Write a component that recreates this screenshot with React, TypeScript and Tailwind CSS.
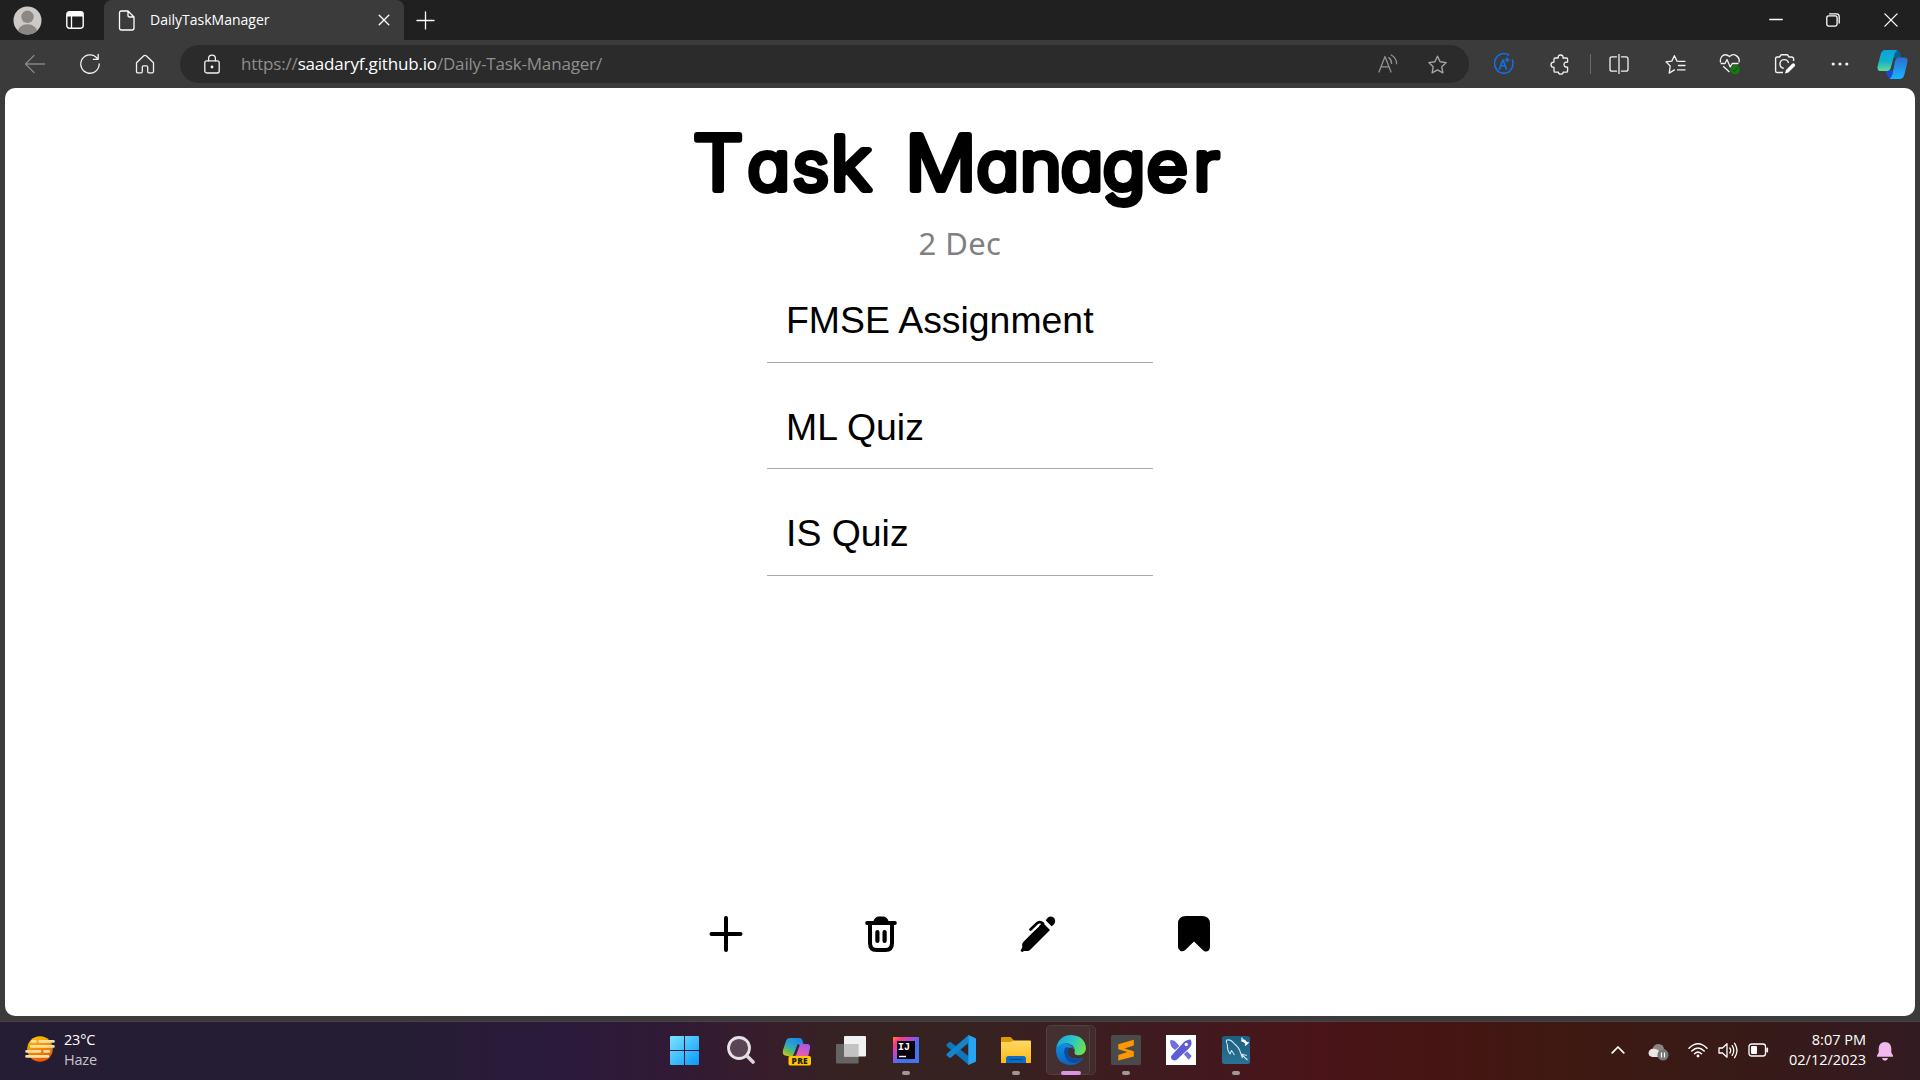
import React from "react";

type P = { children?: React.ReactNode; className?: string; vb?: string; w?: number; h?: number };

const Line = ({ children, className = "", vb = "0 0 20 20", w = 20, h = 20 }: P) => (
  <svg
    width={w}
    height={h}
    viewBox={vb}
    fill="none"
    stroke="currentColor"
    strokeWidth="1.3"
    strokeLinecap="round"
    strokeLinejoin="round"
    className={"block shrink-0 " + className}
  >
    {children}
  </svg>
);

const Flat = ({ children, className = "", vb = "0 0 30 30", w = 30, h = 30 }: P) => (
  <svg width={w} height={h} viewBox={vb} fill="none" className={"block shrink-0 " + className}>
    {children}
  </svg>
);

const STAR = "M10 1.6 12.5 6.9 18.3 7.7 14.1 11.7 15.1 17.5 10 14.7 4.9 17.5 5.9 11.7 1.7 7.7 7.5 6.9Z";

function TabBar() {
  return (
    <header className="flex h-10 items-stretch bg-[#202020]">
      <div className="flex w-[104px] items-center">
        <Flat className="ml-[13px]" vb="0 0 29 29" w={29} h={29}>
          <clipPath id="avatar"><circle cx="14.5" cy="14.5" r="14" /></clipPath>
          <g clipPath="url(#avatar)">
            <rect width="29" height="29" fill="#cccac6" />
            <circle cx="14.5" cy="10.8" r="6.2" fill="#8a8784" />
            <ellipse cx="14.5" cy="25.5" rx="9.6" ry="7.2" fill="#8a8784" />
          </g>
        </Flat>
        <Flat className="ml-6" vb="0 0 18 18" w={18} h={18}>
          <rect x="0.8" y="0.8" width="16.4" height="16.4" rx="2.6" stroke="#fff" strokeWidth="1.4" />
          <path d="M1 3.4Q1 1 3.4 1H14.6Q17 1 17 3.4V5.4H1Z" fill="#fff" />
          <path d="M5.5 5V17" stroke="#fff" strokeWidth="1.3" />
        </Flat>
      </div>
      <div className="flex w-[300px] items-center rounded-t-lg bg-[#3b3b3b]">
        <Line className="ml-[14px] text-white" vb="0 0 18 21" w={18} h={21}>
          <path d="M3.5 1H10L16 7V18Q16 20 14 20H3.5Q1.5 20 1.5 18V3Q1.5 1 3.5 1ZM10 1V5.5Q10 7 11.5 7H16" />
        </Line>
        <span className="mb-[2px] ml-[14px] w-[121px] text-[14px] tracking-[0px] whitespace-nowrap text-white">DailyTaskManager</span>
        <Line className="ml-[107px] text-white" vb="0 0 12 12" w={12} h={12}>
          <path d="M1.2 1.2 10.8 10.8M10.8 1.2 1.2 10.8" />
        </Line>
      </div>
      <div className="flex flex-1 items-center">
        <Line className="ml-3 text-white" vb="0 0 19 19" w={19} h={19}>
          <path d="M9.5 1V18M1 9.5H18" />
        </Line>
        <div className="ml-auto flex items-center">
          <Line className="text-white" vb="0 0 14 14" w={14} h={14}><path d="M0.7 6.5H13.3" /></Line>
          <Line className="ml-[43px] text-white" vb="0 0 14 14" w={14} h={14}>
            <rect x="0.8" y="2.8" width="10.3" height="10.3" rx="1.8" />
            <path d="M3.6 0.8H10.5Q13.2 0.8 13.2 3.5V10" />
          </Line>
          <Line className="mr-[22px] ml-[44px] text-white" vb="0 0 14 14" w={14} h={14}>
            <path d="M0.9 0.9 13.1 13.1M13.1 0.9 0.9 13.1" />
          </Line>
        </div>
      </div>
    </header>
  );
}

function AddressBar() {
  return (
    <div className="flex h-12 items-center bg-[#3b3b3b] text-[#f2f2f2]">
      <Line className="ml-6 text-[#858585]" vb="0 0 22 20" w={22} h={20}>
        <path d="M20.5 10H1.5M10 1.5 1.5 10 10 18.5" />
      </Line>
      <Line className="ml-[33px]" vb="0 0 22 22" w={22} h={22}>
        <path d="M20.2 11A9.2 9.2 0 1 1 18.3 5.4M14.3 6.3H19.2V1.3" />
      </Line>
      <Line className="ml-[34px]" vb="0 0 20 20" w={20} h={20}>
        <path d="M1.5 8.8 8.8 1.8Q10 .8 11.2 1.8L18.5 8.8V17.5Q18.5 18.8 17.2 18.8H13.8Q12.7 18.8 12.7 17.5V13Q12.7 11.8 11.5 11.8H8.5Q7.3 11.8 7.3 13V17.5Q7.3 18.8 6.2 18.8H2.8Q1.5 18.8 1.5 17.5Z" />
      </Line>
      <div className="ml-[25px] flex h-[38px] w-[1289px] items-center rounded-full bg-[#2b2b2b]">
        <Line className="ml-[23px]" vb="0 0 18 20" w={18} h={20}>
          <rect x="1.8" y="6.8" width="14.4" height="12.2" rx="2" />
          <path d="M5.6 6.8V4.5A3.4 3.4 0 0 1 12.4 4.5V6.8" />
          <circle cx="9" cy="13" r="0.8" fill="currentColor" />
        </Line>
        <div className="ml-5 text-[17px] tracking-[-0.17px] whitespace-nowrap text-[#8f8f8f]">
          https://<span className="text-white">saadaryf.github.io</span>/Daily-Task-Manager/
        </div>
        <Line className="ml-auto text-[#929292]" vb="0 0 20 20" w={20} h={20}>
          <path d="M1 18 7 2.5 13 18M3 12.8H11M10.8 3.6Q13.6 5.6 13.6 9.4M13.2 1Q18.6 4 18.6 9.8" />
        </Line>
        <Line className="mr-[21px] ml-[29px] text-[#a5a5a5]" vb="0 0 20 19" w={21} h={21}><path d={STAR} /></Line>
      </div>
      <Line className="ml-[25px] text-[#1171ea]" vb="0 0 20 22" w={20} h={22}>
        <path d="M14.5 2A9.2 9.8 0 1 0 18.4 7" strokeWidth="1.5" />
        <path d="M5.4 16 9 6.8 12.4 16M7 12.8H11.2M13.2 5V8.6M11.4 6.8H15" strokeWidth="1.6" />
      </Line>
      <Line className="ml-[36px]" vb="0 0 20 21" w={20} h={21}>
        <path d="M5.2 4H8.2Q7.8 1 10.6 1T13 4H16.5Q17.6 4 17.6 5.2V8Q14 7.8 14 10.6T17.6 13.2V17Q17.6 18.2 16.5 18.2H13.2Q13 20.2 10.8 20.2T8.4 18.2H5.2Q4 18.2 4 17V13.3Q1 13.2 1 10.7T4 8.1V5.2Q4 4 5.2 4Z" />
      </Line>
      <div className="ml-[20px] h-5 w-px bg-[#6a6a6a]" />
      <Line className="ml-[18px]" vb="0 0 20 20" w={20} h={20}>
        <path d="M7.5 2.8H3Q1 2.8 1 4.8V15.2Q1 17.2 3 17.2H7.5M12.5 2.8H17Q19 2.8 19 4.8V15.2Q19 17.2 17 17.2H12.5M10 0.5V19.5" />
      </Line>
      <Line className="ml-[36px]" vb="0 0 21 20" w={21} h={21}>
        <path d="M14.8 6.8 12 6.6 9.4 1.2 6.8 6.6 1 7.4 5.2 11.5 4.2 18.6 9.4 15.4M12.5 6.8H20M13.5 11H20M12.5 15.4H20" />
      </Line>
      <Flat className="ml-[33px]" vb="0 0 22 22" w={22} h={22}>
        <path d="M1.6 9.4Q.5 5.2 3.6 2.8T10.6 3.6Q13.4.4 17.2 2.6T20 9.4M1.6 10.5H6L8 6.5 11.2 14 13.2 10.5H19.5M4.2 13.2 10.4 19" stroke="#f2f2f2" strokeWidth="1.3" strokeLinejoin="round" />
        <circle cx="16" cy="16.8" r="4.7" fill="#107c10" />
        <path d="M13.8 16.8 15.4 18.4 18.2 15.4" stroke="#173c17" />
      </Flat>
      <Flat className="ml-[33px]" vb="0 0 22 22" w={22} h={22}>
        <path d="M9 19.5H3.2Q1.6 19.5 1.6 17.9V5.6Q1.6 4 3.2 4H5.6L7 1.8H13.6L15 4H17.4Q19.6 4 19.6 5.8V8" stroke="#f2f2f2" strokeWidth="1.4" strokeLinejoin="round" />
        <path d="M9.8 15.2A4.3 4.3 0 1 1 14.5 10" stroke="#f2f2f2" strokeWidth="1.4" />
        <path d="M11 20.4 12 17 18.2 10.8Q19.4 9.8 20.6 11T20.7 13.2L14.4 19.5Z" fill="#fff" />
      </Flat>
      <Flat className="ml-[35px]" vb="0 0 18 4" w={18} h={4}>
        <g fill="#f2f2f2"><circle cx="2.2" cy="2" r="1.6" /><circle cx="9" cy="2" r="1.6" /><circle cx="15.8" cy="2" r="1.6" /></g>
      </Flat>
      <Flat className="ml-7" vb="0 0 31 29" w={31} h={29}>
        <defs>
          <linearGradient id="cpa" x1="0" y1="0" x2="0" y2="1"><stop stopColor="#0aa3df" /><stop offset=".55" stopColor="#14b2c7" /><stop offset="1" stopColor="#66db92" /></linearGradient>
          <linearGradient id="cpb" x1="0" y1="0" x2="0" y2="1"><stop stopColor="#2d6fd2" /><stop offset="1" stopColor="#16b6ff" /></linearGradient>
        </defs>
        <path d="M8 20H16L14 29Q10.5 28 9.5 24Z" fill="#1d49cf" />
        <path d="M18 0Q22.8 0 23.4 4L24.3 8H16Z" fill="#0c5f93" />
        <path d="M8.5 0H20.5Q18.4 1 17.5 4L13.8 18Q12.8 21 9.6 21H4Q-.5 21 .7 16L3.6 4.4Q4.8 0 8.5 0Z" fill="url(#cpa)" />
        <path d="M22.2 29H12.5Q14.6 28 15.3 24.5L18 11Q19 7.6 22 7.6H27Q31.4 7.6 30.3 12.4L27.4 24.5Q26.2 29 22.2 29Z" fill="url(#cpb)" />
      </Flat>
    </div>
  );
}

const tasks = ["FMSE Assignment", "ML Quiz", "IS Quiz"];

function Page() {
  return (
    <main className="mx-[5px] mb-[5px] flex h-[928px] flex-col items-center overflow-hidden rounded-[10px] bg-white font-['Liberation_Sans',Arial,sans-serif]">
      <h1 className="mt-[14px] h-[122px] w-[560px]">
        <svg width="560" height="122" viewBox="0 0 560 122" className="block overflow-visible font-['Comic_Sans_MS',Inter,sans-serif]">
          <text
            x="12.5 64.8 108.2 145 182.7 216.5 285 327 366.2 406.5 448.8 494"
            y="88"
            transform="scale(1.04 1)"
            fontSize="68"
            fontWeight="300"
            fill="#000"
            stroke="#000"
            strokeWidth="6"
            strokeLinejoin="round"
            style={{ fontFeatureSettings: '"cv11"' }}
          >
            <tspan fontSize="76">T</tspan>as<tspan fontSize="74">k</tspan> <tspan fontSize="76">M</tspan>anager
          </text>
        </svg>
      </h1>
      <p className="h-[53.7px] text-[31px] leading-[38px] tracking-[0.4px] text-[#808080] font-['Noto_Sans',sans-serif]">2 Dec</p>
      <ul className="w-[386px]">
        {tasks.map((t) => (
          <li key={t} className="mb-[21.5px] flex h-[85px] items-center border-b border-[#a9a9a9] pt-[3px] pl-[19px] text-[37.4px] leading-none text-black">
            {t}
          </li>
        ))}
      </ul>
      <div className="mt-auto mr-px mb-[64px] flex w-[502px] items-center justify-between">
        <Flat vb="0 0 34 36" w={34} h={36}><path d="M17 2V34M2.5 18H31.5" stroke="#000" strokeWidth="4" strokeLinecap="round" /></Flat>
        <Flat vb="0 0 32 36" w={32} h={36}>
          <path d="M8.5 5Q10 .5 14 .5H18Q22 .5 23.5 5H30Q31.8 5 31.8 7T30 9H2Q.2 9 .2 7T2 5Z" fill="#000" />
          <path d="M5 8V27Q5 34 11.5 34H20.5Q27 34 27 27V8" stroke="#000" strokeWidth="4" />
          <path d="M12.4 16V25M19.6 16V25" stroke="#000" strokeWidth="4.2" strokeLinecap="round" />
        </Flat>
        <Flat vb="0 0 36 36" w={36} h={36}>
          <path d="M22.6 6.6 30 14 10 34Q9 35 7.5 35L4 35 2.2 36Q0 35.5 1 33.6L2.2 32V28.5Q2.2 27 3.3 26Z" fill="#000" />
          <path d="M11.5 15.5 18 9.5" stroke="#fff" strokeWidth="3" />
          <path d="M10.5 13.5 17 7.2Q20 4.9 23 7.5" stroke="#000" strokeWidth="2.7" strokeLinecap="round" />
          <path d="M25.8 4.6Q27.2.8 30.8.5 35 .8 35.2 5 35 8.4 31.6 10.2Z" fill="#000" />
        </Flat>
        <Flat vb="0 0 32 36" w={32} h={36}>
          <path d="M8 0H24Q32 0 32 8V31Q31.5 36 27 35.5 26 35.3 25 34.2L16 25.5 7 34.2Q5 36 2.5 35 0 33.8 0 31V8Q0 0 8 0Z" fill="#000" />
        </Flat>
      </div>
    </main>
  );
}

function AppSlot({ children, mark }: { children: React.ReactNode; mark?: boolean }) {
  return (
    <div className="relative flex h-[52px] w-[55px] items-center justify-center">
      {children}
      {mark && <span className="absolute bottom-[1px] left-[24px] h-1 w-2 rounded-full bg-[#a09796]" />}
    </div>
  );
}

function Taskbar() {
  return (
    <footer className="flex h-[59px] items-start border-t border-[#4a4046] bg-[linear-gradient(90deg,#241d33_0px,#251d34_400px,#2c1a3c_560px,#301a35_670px,#371d2c_760px,#362321_860px,#362321_960px,#3c1d20_1090px,#43181d_1220px,#4a1418_1320px,#461513_1440px,#3f1912_1560px,#371a17_1750px,#321b22_1920px)] text-white">
      <div className="flex w-[657px] pt-2">
        <Flat className="mt-[5px] ml-[25px]" vb="0 0 30 28" w={30} h={28}>
          <defs><linearGradient id="sun" x1="0" y1="0" x2=".4" y2="1"><stop stopColor="#ffcf00" /><stop offset="1" stopColor="#e95a08" /></linearGradient></defs>
          <circle cx="15" cy="14" r="12.8" fill="url(#sun)" />
          <path d="M7 6.4H10.5M14.5 6.4H28.5M6 11.4H28.5M1.5 16.4H15M19.5 16.4H24M1.5 21.4H23" stroke="#f7dfa3" strokeWidth="2.6" strokeLinecap="round" />
        </Flat>
        <div className="ml-[9px] text-[14.5px] leading-5 tracking-[-0.2px]">
          <div>23°C</div>
          <div className="text-[#c9c3cc]">Haze</div>
        </div>
      </div>
      <nav className="mt-[2px] flex">
        <div className="mr-[1px]"><AppSlot>
          <Flat vb="0 0 29 29" w={29} h={29}>
            <defs><linearGradient id="win" gradientUnits="userSpaceOnUse" x1="0" y1="0" x2="29" y2="29"><stop stopColor="#7be5ff" /><stop offset="1" stopColor="#0898ff" /></linearGradient></defs>
            <path d="M0 1Q0 0 1 0H14V14H0ZM15 0H28Q29 0 29 1V14H15ZM0 15H14V29H1Q0 29 0 28ZM15 15H29V28Q29 29 28 29H15Z" fill="url(#win)" />
          </Flat>
        </AppSlot></div>
        <AppSlot>
          <Flat vb="0 0 28 28" w={28} h={28}>
            <circle cx="12" cy="12" r="10.5" fill="#5b4454" stroke="#e6e2e6" strokeWidth="2.8" />
            <path d="M19.8 19.8 26 26" stroke="#dcd9dc" strokeWidth="3.6" strokeLinecap="round" />
          </Flat>
        </AppSlot>
        <AppSlot>
          <Flat vb="0 0 29 29" w={29} h={29} className="mt-[2px] ml-[2px]">
            <defs>
              <linearGradient id="pa" x1=".7" y1="0" x2=".1" y2="1"><stop stopColor="#1f86ea" /><stop offset=".45" stopColor="#2aa7c9" /><stop offset=".75" stopColor="#6cbf4f" /><stop offset="1" stopColor="#f4c40c" /></linearGradient>
              <linearGradient id="pb" x1=".6" y1="0" x2=".3" y2="1"><stop stopColor="#a558ef" /><stop offset="1" stopColor="#f2609c" /></linearGradient>
            </defs>
            <path d="M8 1H18Q20.5 1.5 21.4 7H15.8L12 17Q11 20 8 19.5L3 18.5Q0 17.5 1 13L4 4Q5 1 8 1Z" fill="url(#pa)" />
            <path d="M17 7H25Q28.6 7 28 11L26 20H12Z" fill="url(#pb)" />
            <path d="M15.5 8H17.8L14 18.5H11.5Z" fill="#3c2030" />
            <rect x="6.5" y="19" width="22.5" height="9.6" rx="1.8" fill="#ffc800" />
            <text x="17.8" y="26.8" fontSize="8.4" fontWeight="800" textAnchor="middle" fill="#241a00" letterSpacing=".3" className="font-['Open_Sans',sans-serif]">PRE</text>
          </Flat>
        </AppSlot>
        <AppSlot>
          <Flat vb="0 0 30 28" w={30} h={28}>
            <rect x="0" y="8" width="22.6" height="19.6" rx="1" fill="#646464" />
            <rect x="8" y="0" width="22" height="20.6" rx="1" fill="#f1f1f1" />
            <path d="M8 8H22.6V20.6H8Z" fill="#c2c2c2" />
          </Flat>
        </AppSlot>
        <AppSlot mark>
          <Flat vb="0 0 26 26" w={26} h={26}>
            <defs><linearGradient id="ij" x1="0" y1="0" x2="1" y2="1"><stop stopColor="#ff8a2c" /><stop offset=".16" stopColor="#fb3c83" /><stop offset=".4" stopColor="#a94ddc" /><stop offset=".6" stopColor="#3975ef" /><stop offset="1" stopColor="#4a70f2" /></linearGradient></defs>
            <rect width="26" height="26" fill="url(#ij)" />
            <rect x="4" y="4" width="18" height="18" fill="#08030b" />
            <path d="M6 19.5H13" stroke="#fff" strokeWidth="1.4" />
            <text x="5" y="13.2" fontSize="10" fontWeight="700" fill="#fff" className="font-['Liberation_Mono',monospace]">IJ</text>
          </Flat>
        </AppSlot>
        <AppSlot>
          <Flat vb="0 0 30 30" w={30} h={30}>
            <path d="M22.4.2 29 3V27L22.4 29.8 1 11.6Q-.2 10.2 1 9L3 7.2Q4 6.6 5 7.2L22.4 21Z" fill="#0e76bd" />
            <path d="M22.4.2V8L5 22.6Q4 23.4 3 22.6L1 20.8Q-.2 19.6 1 18.4Z" fill="#1684cd" />
            <path d="M22.4.1 30 3.6V26.4L22.4 29.9Z" fill="#26a6f2" />
          </Flat>
        </AppSlot>
        <AppSlot mark>
          <Flat vb="0 0 30 26" w={30} h={26}>
            <defs><linearGradient id="fo" x1="0" y1="0" x2="0" y2="1"><stop stopColor="#ffd866" /><stop offset="1" stopColor="#fcba12" /></linearGradient></defs>
            <path d="M0 1Q0 0 1 0H9.5L13 3.6V8H0Z" fill="#dd9a04" />
            <path d="M0 5H9.5L13 3.6H29Q30 3.6 30 4.6V26H0Z" fill="url(#fo)" />
            <path d="M5 26V21.6Q5 19 7.6 19H22.4Q25 19 25 21.6V26Z" fill="#0a6dc4" />
            <path d="M8.5 22.5H21.5" stroke="#064582" />
          </Flat>
        </AppSlot>
        <div className="relative flex h-[52px] w-[55px] items-center justify-center">
          <span className="absolute top-[1px] left-[3px] h-[50px] w-[50px] rounded-[5px] border border-[#4d3a3b] bg-[#402c2d]" />
          <span className="absolute top-[1px] left-[3px] h-[50px] w-[44px] rounded-[5px] border border-[#534041] bg-[#453031]" />
          <Flat vb="0 0 30 30" w={30} h={30} className="relative">
            <defs>
              <linearGradient id="ea" x1="0" y1=".2" x2="1" y2=".5"><stop stopColor="#1ca5df" /><stop offset=".5" stopColor="#28c4cf" /><stop offset="1" stopColor="#6be34f" /></linearGradient>
              <linearGradient id="eb" x1="0" y1="0" x2="0" y2="1"><stop stopColor="#128fe0" /><stop offset="1" stopColor="#0b63c0" /></linearGradient>
            </defs>
            <path d="M0 14.5Q1 7.5 9 8 17 9 18.5 16 16.5 11 13 13 9.5 16.5 13 21 18 25.5 27.5 22.5 23 30 15 30 0 29.5 0 14.5Z" fill="url(#eb)" />
            <path d="M.3 12.5Q3 0 15.5 0 29 .8 30 13.5 29.5 20 22.5 20.3 17.5 20 18.6 17 19.5 14 16.5 10.5 9 4.5 .3 12.5Z" fill="url(#ea)" />
            <path d="M9 13Q7 18 10.2 23.5 13 27.8 18 28 24 27.5 27.4 22.8 18.5 25.6 13.5 21.5 9.8 17 13 12.8 10.6 11.4 9 13Z" fill="#0a4d9d" />
          </Flat>
          <span className="absolute bottom-[1px] left-[18px] h-1 w-5 rounded-full bg-[#d997e2]" />
        </div>
        <AppSlot mark>
          <Flat vb="0 0 30 30" w={30} h={30}>
            <rect width="30" height="30" rx="1.5" fill="#4a4a4a" />
            <path d="M22.8 4.8V10.6L13.5 13.5 22.8 16.2V21.6L7.3 25.5V20L16.5 17 7.3 14.3V9.2Z" fill="#ff9800" />
          </Flat>
        </AppSlot>
        <AppSlot>
          <Flat vb="0 0 30 30" w={30} h={30}>
            <rect width="30" height="30" fill="#fff" />
            <path d="M24.6 4.4Q27 9 23.4 13L10.4 25Q7.6 26.4 5.2 23.8 4.4 21.8 6 20L17 8Q20 4.6 24.6 4.4Z" fill="#5f5dd6" />
            <path d="M4.2 5.2Q8 4.6 11 8.2L13.3 11 9.2 15Q3.5 12 4.2 5.2ZM17.8 19.2 21.2 16.2 25.7 21 22.8 24.7Z" fill="#716fe0" />
            <circle cx="20.3" cy="9.4" r="1.7" fill="#fff" />
          </Flat>
        </AppSlot>
        <AppSlot mark>
          <Flat vb="0 0 28 28" w={28} h={28}>
            <defs><linearGradient id="my" x1="0" y1="0" x2="0" y2="1"><stop stopColor="#1b607f" /><stop offset="1" stopColor="#2a7195" /></linearGradient></defs>
            <rect width="28" height="28" rx="2.5" fill="url(#my)" />
            <path d="M4.5 4Q9 3 12.5 8 17 11 19 18L25.5 24M19 18 24.8 19.5M19 18 20.5 22M4.5 4Q3.6 6 5.5 9 5 14 8 18L9.5 14.5 12.5 19" stroke="#cfe1ea" strokeWidth="1.1" strokeLinejoin="round" />
            <path d="M20.8 4 25.4 8" stroke="#fff" strokeWidth="2.4" /><path d="M20 1.6V5.2H23.6M23 9.5 26.6 6.2" stroke="#fff" strokeWidth="1.3" />
          </Flat>
        </AppSlot>
      </nav>
      <div className="ml-auto flex items-start">
        <Line className="mt-[23px] text-white" vb="0 0 14 9" w={14} h={9}><path d="M1.2 7.8 7 2 12.8 7.8" strokeWidth="1.7" /></Line>
        <Flat className="mt-[20px] ml-[23px]" vb="0 0 21 19" w={21} h={19}>
          <path d="M4.5 7Q6 2 10.5 2 15.5 2.2 16 7 19.5 8 19 12L10 9Z" fill="#8e8483" />
          <path d="M4.6 15Q.5 14.5.5 11 1 7 5 6.8 9 6 11.5 9.6L18 10V15Z" fill="#e9e6e6" />
          <circle cx="15" cy="13" r="5.6" fill="#777" />
          <path d="M13.5 10.5V15.5M16.5 10.5V15.5" stroke="#fff" strokeWidth="1.2" />
        </Flat>
        <Line className="mt-[20px] ml-[19px] text-white" vb="0 0 20 16" w={20} h={16}>
          <path d="M1 6.2Q10-2.7 19 6.2M3.8 9Q10 3 16.2 9M6.5 11.8Q10 8.5 13.5 11.8" strokeWidth="1.5" />
          <circle cx="10" cy="14" r="1.4" fill="currentColor" stroke="none" />
        </Line>
        <Line className="mt-[20px] ml-[10px] text-white" vb="0 0 20 17" w={20} h={17}>
          <path d="M1 6H4.5L9 1.8V15.2L4.5 11H1ZM11.8 6Q13.6 8.5 11.8 11M14.2 3.6Q17.4 8.5 14.2 13.4M16.6 1.3Q21.4 8.5 16.6 15.7" />
        </Line>
        <Line className="mt-[21px] ml-[10px] text-white" vb="0 0 21 14" w={21} h={14}>
          <rect x="1" y="1" width="16.5" height="12" rx="2.6" />
          <rect x="3" y="3" width="6" height="8" rx="1" fill="currentColor" stroke="none" />
          <path d="M19.2 5.4V8.6" strokeWidth="1.8" />
        </Line>
        <div className="mt-2 ml-[8px] w-[89px] text-right text-[14.5px] leading-5 tracking-[0px] whitespace-nowrap">
          <div>8:07 PM</div>
          <div>02/12/2023</div>
        </div>
        <Flat className="mt-[19px] mr-[26px] ml-[10px]" vb="0 0 18 20" w={18} h={20}>
          <path d="M9 1Q15 1.4 15.3 7.5V11.5L17 14.5V15.8H1V14.5L2.7 11.5V7.5Q3 1.4 9 1ZM6 17H12Q11.5 19.7 9 19.7T6 17Z" fill="#efb8ee" />
        </Flat>
      </div>
    </footer>
  );
}

export default function App() {
  return (
    <div className="h-[1080px] w-[1920px] overflow-hidden bg-[#3b3b3b] font-['Open_Sans','Noto_Sans',sans-serif]">
      <TabBar />
      <AddressBar />
      <Page />
      <Taskbar />
    </div>
  );
}
